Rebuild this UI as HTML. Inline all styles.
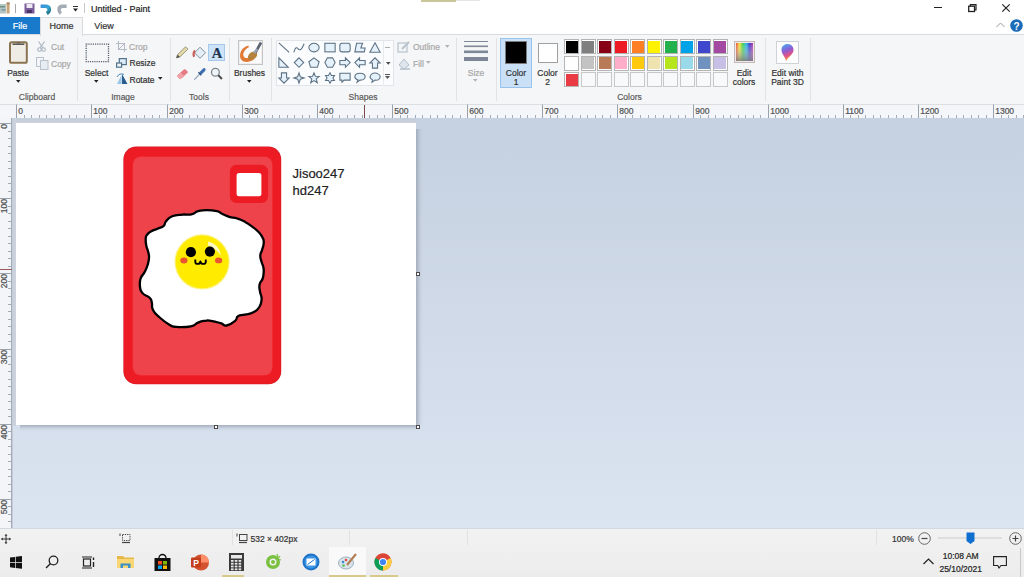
<!DOCTYPE html><html><head><meta charset="utf-8"><style>
*{margin:0;padding:0;box-sizing:border-box}
html,body{width:1024px;height:577px;overflow:hidden;background:#fff;font-family:"Liberation Sans",sans-serif}
.a{position:absolute}
.t{position:absolute;line-height:12px;white-space:nowrap;-webkit-text-stroke:0.2px currentColor}
svg{overflow:visible}
</style></head><body>
<div class="a" style="left:0px;top:0px;width:1024px;height:34px;background:#fff"></div>
<div class="a" style="left:421px;top:0px;width:35px;height:1.5px;background:#c9c79a"></div>
<div class="a" style="left:456px;top:0px;width:24px;height:1px;background:#e6e6e6"></div>
<svg class="a" style="left:0px;top:2px;" width="12" height="12" viewBox="0 0 12 12"><rect x="0" y="2" width="6" height="9.5" fill="#b4c6c2"/><rect x="0" y="4" width="5" height="1.5" fill="#6f8f86"/><rect x="1.5" y="7" width="4" height="1.6" fill="#7d9aa8"/><rect x="6.6" y="0.5" width="3" height="11" fill="#c9a57a"/><rect x="6.6" y="0.5" width="3" height="2" fill="#a88a66"/></svg>
<div class="a" style="left:15px;top:3.5px;width:1px;height:9.5px;background:#a8a8a8"></div>
<svg class="a" style="left:24px;top:3px;" width="11" height="11" viewBox="0 0 11 11"><rect x="0.5" y="0.5" width="10" height="10" fill="#7a5c9a"/><rect x="2.5" y="1" width="6" height="4" fill="#efe9f4"/><rect x="3" y="7" width="5" height="3" fill="#4b3566"/></svg>
<svg class="a" style="left:40px;top:3px;" width="12" height="12" viewBox="0 0 12 12"><defs><linearGradient id="ug" x1="0" y1="0" x2="1" y2="1"><stop offset="0" stop-color="#3a8fd8"/><stop offset=".5" stop-color="#35a6d6"/><stop offset="1" stop-color="#1f6f80"/></linearGradient></defs><path d="M0.6 3.3 H5.2 Q9.3 3.3 9.3 6.6 Q9.3 9 6.8 10.6" stroke="url(#ug)" stroke-width="3.6" fill="none"/></svg>
<svg class="a" style="left:56px;top:3px;" width="12" height="12" viewBox="0 0 12 12"><path d="M10.6 3.3 H6.8 Q3 3.3 3 6.6 Q3 9 4.8 10.6" stroke="#a3abb5" stroke-width="3.4" fill="none"/></svg>
<svg class="a" style="left:73px;top:6px;" width="6" height="6" viewBox="0 0 6 6"><rect x="0" y="0" width="5" height="1" fill="#333"/><path d="M0 2.5 H5 L2.5 5.5 Z" fill="#222"/></svg>
<div class="a" style="left:84px;top:3px;width:1px;height:10px;background:#c8c8c8"></div>
<div class="t" style="left:91px;top:2.5px;font-size:9px;color:#222;">Untitled - Paint</div>
<div class="a" style="left:933.7px;top:7px;width:8px;height:1.4px;background:#222"></div>
<svg class="a" style="left:967.5px;top:4px;" width="9" height="8" viewBox="0 0 9 8"><rect x="0.7" y="2.2" width="5.8" height="5.3" fill="none" stroke="#222" stroke-width="1.3"/><path d="M2.4 2.2 V0.7 H8 V5.8 H6.5" fill="none" stroke="#222" stroke-width="1.2"/></svg>
<svg class="a" style="left:1002px;top:3.5px;" width="8" height="8" viewBox="0 0 8 8"><path d="M0.3 0.3 L7.7 7.7 M7.7 0.3 L0.3 7.7" stroke="#222" stroke-width="1.2"/></svg>
<div class="a" style="left:0px;top:17px;width:40px;height:17px;background:#1979ca"></div>
<div class="t" style="left:0.0px;top:19.5px;width:40px;text-align:center;font-size:9px;color:#fff;">File</div>
<div class="t" style="left:84.0px;top:20.0px;width:40px;text-align:center;font-size:9px;color:#333;">View</div>
<svg class="a" style="left:996px;top:22px;" width="9" height="6" viewBox="0 0 9 6"><path d="M0.5 5 L4.5 1 L8.5 5" stroke="#9a9a9a" stroke-width="1" fill="none"/></svg>
<svg class="a" style="left:1010px;top:19px;" width="13" height="13" viewBox="0 0 13 13"><circle cx="6.5" cy="6.5" r="6.3" fill="#1b6bb8"/><text x="6.5" y="10.5" font-size="10" font-weight="bold" text-anchor="middle" fill="#fff" font-family="Liberation Sans">?</text></svg>
<div class="a" style="left:0px;top:34px;width:1024px;height:71px;background:#f5f6f7;border-top:1px solid #dadbdc;border-bottom:1px solid #dcdee2"></div>
<div class="a" style="left:40px;top:17px;width:43px;height:19px;background:#f5f6f7;border:1px solid #dadbdc;border-bottom:none"></div>
<div class="t" style="left:40.0px;top:20.0px;width:43px;text-align:center;font-size:9px;color:#333;">Home</div>
<div class="a" style="left:77px;top:38px;width:1px;height:63px;background:#e2e3e4"></div>
<div class="a" style="left:170px;top:38px;width:1px;height:63px;background:#e2e3e4"></div>
<div class="a" style="left:229px;top:38px;width:1px;height:63px;background:#e2e3e4"></div>
<div class="a" style="left:271px;top:38px;width:1px;height:63px;background:#e2e3e4"></div>
<div class="a" style="left:456px;top:38px;width:1px;height:63px;background:#e2e3e4"></div>
<div class="a" style="left:496px;top:38px;width:1px;height:63px;background:#e2e3e4"></div>
<div class="a" style="left:765px;top:38px;width:1px;height:63px;background:#e2e3e4"></div>
<div class="a" style="left:810px;top:38px;width:1px;height:63px;background:#e2e3e4"></div>
<div class="t" style="left:-3.0px;top:91.0px;width:80px;text-align:center;font-size:8.5px;color:#5c5c5c;">Clipboard</div>
<div class="t" style="left:83.0px;top:91.0px;width:80px;text-align:center;font-size:8.5px;color:#5c5c5c;">Image</div>
<div class="t" style="left:159.0px;top:91.0px;width:80px;text-align:center;font-size:8.5px;color:#5c5c5c;">Tools</div>
<div class="t" style="left:323.0px;top:91.0px;width:80px;text-align:center;font-size:8.5px;color:#5c5c5c;">Shapes</div>
<div class="t" style="left:589.5px;top:91.0px;width:80px;text-align:center;font-size:8.5px;color:#5c5c5c;">Colors</div>
<svg class="a" style="left:9px;top:40px;" width="19" height="24" viewBox="0 0 19 24"><rect x="1" y="2.2" width="16.8" height="20.6" rx="1.6" fill="#efece6" stroke="#8b7352" stroke-width="2"/><path d="M3.5 4.2 H15.3" stroke="#5d5a55" stroke-width="1.6"/><path d="M7.5 3.4 Q9.4 0.3 11.3 3.4 Z" fill="#6a6660"/></svg>
<div class="t" style="left:-2.0px;top:66.5px;width:40px;text-align:center;font-size:8.5px;color:#333;">Paste</div>
<svg class="a" style="left:15.75px;top:80.0px" width="4.5" height="2.8" viewBox="0 0 4.5 2.8"><path d="M0 0 H4.5 L2.25 2.8 Z" fill="#222"/></svg>
<svg class="a" style="left:37px;top:41px;" width="9" height="11" viewBox="0 0 9 11"><path d="M1.5 0.5 L6 7 M7.5 0.5 L3 7" stroke="#a9b4c0" stroke-width="1.1" fill="none"/><circle cx="2.5" cy="8.5" r="1.8" fill="none" stroke="#a9b4c0" stroke-width="1.1"/><circle cx="6.5" cy="8.5" r="1.8" fill="none" stroke="#a9b4c0" stroke-width="1.1"/></svg>
<div class="t" style="left:51px;top:40.5px;font-size:8.5px;color:#a8a8a8;">Cut</div>
<svg class="a" style="left:36px;top:57px;" width="13" height="13" viewBox="0 0 13 13"><rect x="0.5" y="0.5" width="7" height="9" fill="#f3f5f8" stroke="#b8c2cd"/><rect x="4.5" y="3.5" width="7.5" height="9" fill="#e7ecf2" stroke="#b8c2cd"/></svg>
<div class="t" style="left:51px;top:57.5px;font-size:8.5px;color:#a8a8a8;">Copy</div>
<svg class="a" style="left:85px;top:43px;" width="25" height="20" viewBox="0 0 25 20"><rect x="1.2" y="1.2" width="22.3" height="17.5" fill="none" stroke="#56606c" stroke-width="1.3" stroke-dasharray="1.2 1"/></svg>
<div class="t" style="left:76.5px;top:66.5px;width:40px;text-align:center;font-size:8.5px;color:#333;">Select</div>
<svg class="a" style="left:94.45px;top:79.89999999999999px" width="4.5" height="2.8" viewBox="0 0 4.5 2.8"><path d="M0 0 H4.5 L2.25 2.8 Z" fill="#222"/></svg>
<svg class="a" style="left:116px;top:41px;" width="11" height="11" viewBox="0 0 11 11"><path d="M2.5 0 V8.5 H11 M0 2.5 H8.5 V11" stroke="#b3bcc7" stroke-width="1.1" fill="none"/><path d="M3 8 L9 2" stroke="#b3bcc7" stroke-width="1"/></svg>
<div class="t" style="left:129px;top:40.5px;font-size:8.5px;color:#a8a8a8;">Crop</div>
<svg class="a" style="left:116px;top:58px;" width="11" height="10" viewBox="0 0 11 10"><rect x="3.3" y="0.6" width="7" height="6" fill="#dcedf8" stroke="#52728a" stroke-width="1.2"/><rect x="0.6" y="5" width="5" height="4.2" fill="#eef6fb" stroke="#52728a" stroke-width="1.2"/></svg>
<div class="t" style="left:129.5px;top:57.0px;font-size:8.5px;color:#333;">Resize</div>
<svg class="a" style="left:116px;top:73px;" width="12" height="12" viewBox="0 0 12 12"><path d="M6 1 L11.5 11 H6 Z" fill="#2a5d8f"/><path d="M5.5 2 L1 11 H5.5 Z" fill="#9cc6e6"/><path d="M1 4 A5 5 0 0 1 8 1.5" stroke="#4b8cc4" fill="none" stroke-width="1"/></svg>
<div class="t" style="left:129.5px;top:73.5px;font-size:8.5px;color:#333;">Rotate</div>
<svg class="a" style="left:157.75px;top:77.39999999999999px" width="4.5" height="2.8" viewBox="0 0 4.5 2.8"><path d="M0 0 H4.5 L2.25 2.8 Z" fill="#222"/></svg>
<div class="a" style="left:208.2px;top:44px;width:16.8px;height:16.7px;background:#cde3f7;border:1px solid #a6c8ea"></div>
<svg class="a" style="left:170px;top:40px;" width="60" height="46" viewBox="0 0 60 46"><path d="M176.4 57.9 L177.6 54.6 L185.6 46.8 L187.9 49.1 L179.9 56.9 Z" transform="translate(-170 -40)" fill="#e6dca6" stroke="#8d8a78" stroke-width=".9"/><path d="M176.4 57.9 L177.6 54.6 L179.9 56.9 Z" transform="translate(-170 -40)" fill="#555"/></svg>
<svg class="a" style="left:170px;top:40px;" width="60" height="46" viewBox="0 0 60 46"><g transform="translate(-170 -40)"><path d="M200 47.2 L205.5 52.8 L200 58.3 L194.5 52.8 Z" fill="#e4eef6" stroke="#7f919e" stroke-width="1"/><path d="M195 50.5 Q192.6 53.5 194.2 56.8" stroke="#c9605a" stroke-width="2.2" fill="none"/></g></svg>
<div class="t" style="left:208.5px;top:46.8px;width:17px;text-align:center;font-size:14.5px;color:#1e3550;font-family:'Liberation Serif',serif;"><b>A</b></div>
<svg class="a" style="left:170px;top:40px;" width="60" height="46" viewBox="0 0 60 46"><g transform="translate(-170 -40)"><path d="M177.5 75.2 L183.8 69.6 Q184.8 68.9 185.6 69.6 L187.6 71.5 Q188.2 72.3 187.4 73.1 L181.2 78.6 Q180.3 79.2 179.4 78.5 L177.4 76.6 Q176.8 75.9 177.5 75.2 Z" fill="#e57c83"/><path d="M177.5 75.2 L180.5 72.5 L184.5 76.2 L181.2 78.6 Q180.3 79.2 179.4 78.5 L177.4 76.6 Z" fill="#f0a2a6"/></g></svg>
<svg class="a" style="left:170px;top:40px;" width="60" height="46" viewBox="0 0 60 46"><g transform="translate(-170 -40)"><path d="M194.3 79.6 L200.3 73.4" stroke="#8ea2b8" stroke-width="1.3"/><path d="M199 72.5 L203.2 68.4 Q204.5 67.7 205.4 68.7 Q206 69.7 205.1 70.9 L201 75 Z" fill="#3d6fae"/><path d="M198.3 72.3 L201.3 75.3" stroke="#2a4f80" stroke-width="1.2"/></g></svg>
<svg class="a" style="left:170px;top:40px;" width="60" height="46" viewBox="0 0 60 46"><g transform="translate(-170 -40)"><circle cx="215.4" cy="72.3" r="3.9" fill="#f2f5f8" stroke="#7d8790" stroke-width="1.3"/><path d="M218.4 75.3 L221.9 79" stroke="#4a4a4a" stroke-width="2"/></g></svg>
<svg class="a" style="left:237.5px;top:40px;" width="25" height="25" viewBox="0 0 25 25"><rect x="0.6" y="0.6" width="23.8" height="23.8" fill="#fbfbfb" stroke="#c4c4c4" stroke-width="1.2"/><path d="M10.5 5.5 C4 7 0.8 13 2.5 18.5 C4.5 23 11 23 16 19.5 L14 16 C10 19 6.5 18.5 5.5 16 C4.5 13 7 9 10.8 7.2 Z" fill="#e07a36"/><ellipse cx="14.5" cy="15.8" rx="5.2" ry="3.6" transform="rotate(-40 14.5 15.8)" fill="#b5823e"/><path d="M17.5 12.5 L23 2.5" stroke="#5a6170" stroke-width="2.6"/><path d="M16 13 L19.5 9" stroke="#9aa4b4" stroke-width="2.5"/></svg>
<div class="t" style="left:227.5px;top:66.5px;width:44px;text-align:center;font-size:8.5px;color:#333;">Brushes</div>
<svg class="a" style="left:247.25px;top:80.3px" width="4.5" height="2.8" viewBox="0 0 4.5 2.8"><path d="M0 0 H4.5 L2.25 2.8 Z" fill="#222"/></svg>
<div class="a" style="left:276px;top:40px;width:118px;height:46px;background:#fbfcfd;border:1px solid #e1e4e8"></div>
<div class="a" style="left:383px;top:40px;width:1px;height:46px;background:#e8eaed"></div>
<svg class="a" style="left:278.3px;top:42.3px" width="12" height="12" viewBox="0 0 14 14"><path d="M1 1 L13 12" stroke="#5c7184" stroke-width="1.25"/></svg>
<svg class="a" style="left:293.37px;top:42.3px" width="12" height="12" viewBox="0 0 14 14"><path d="M1 12 Q3 4 6 8 Q9 12 13 2" stroke="#5c7184" stroke-width="1.25" fill="none"/></svg>
<svg class="a" style="left:308.44px;top:42.3px" width="12" height="12" viewBox="0 0 14 14"><ellipse cx="7" cy="6.5" rx="6" ry="5" fill="#e6f2fb" stroke="#5c7184" stroke-width="1.25"/></svg>
<svg class="a" style="left:323.51px;top:42.3px" width="12" height="12" viewBox="0 0 14 14"><rect x="1" y="1.5" width="12" height="10" fill="#e6f2fb" stroke="#5c7184" stroke-width="1.25"/></svg>
<svg class="a" style="left:338.58000000000004px;top:42.3px" width="12" height="12" viewBox="0 0 14 14"><rect x="1" y="1.5" width="12" height="10" rx="2.5" fill="#e6f2fb" stroke="#5c7184" stroke-width="1.25"/></svg>
<svg class="a" style="left:353.65px;top:42.3px" width="12" height="12" viewBox="0 0 14 14"><path d="M3 1.5 H10 L8 7 H13 L12 11.5 H1 Z" fill="#e6f2fb" stroke="#5c7184" stroke-width="1.25"/></svg>
<svg class="a" style="left:368.72px;top:42.3px" width="12" height="12" viewBox="0 0 14 14"><path d="M7 1 L13 12 H1 Z" fill="#e6f2fb" stroke="#5c7184" stroke-width="1.25"/></svg>
<svg class="a" style="left:278.3px;top:56.949999999999996px" width="12" height="12" viewBox="0 0 14 14"><path d="M1 1 V12 H12 Z" fill="#e6f2fb" stroke="#5c7184" stroke-width="1.25"/></svg>
<svg class="a" style="left:293.37px;top:56.949999999999996px" width="12" height="12" viewBox="0 0 14 14"><path d="M7 1 L12.5 6.5 L7 12 L1.5 6.5 Z" fill="#e6f2fb" stroke="#5c7184" stroke-width="1.25"/></svg>
<svg class="a" style="left:308.44px;top:56.949999999999996px" width="12" height="12" viewBox="0 0 14 14"><path d="M7 1 L13 5.5 L11 12 H3 L1 5.5 Z" fill="#e6f2fb" stroke="#5c7184" stroke-width="1.25"/></svg>
<svg class="a" style="left:323.51px;top:56.949999999999996px" width="12" height="12" viewBox="0 0 14 14"><path d="M4 1 H10 L13 6.5 L10 12 H4 L1 6.5 Z" fill="#e6f2fb" stroke="#5c7184" stroke-width="1.25"/></svg>
<svg class="a" style="left:338.58000000000004px;top:56.949999999999996px" width="12" height="12" viewBox="0 0 14 14"><path d="M1 4 H7.5 V1 L13 6.5 L7.5 12 V9 H1 Z" fill="#e6f2fb" stroke="#5c7184" stroke-width="1.25"/></svg>
<svg class="a" style="left:353.65px;top:56.949999999999996px" width="12" height="12" viewBox="0 0 14 14"><path d="M13 4 H6.5 V1 L1 6.5 L6.5 12 V9 H13 Z" fill="#e6f2fb" stroke="#5c7184" stroke-width="1.25"/></svg>
<svg class="a" style="left:368.72px;top:56.949999999999996px" width="12" height="12" viewBox="0 0 14 14"><path d="M4 13 V7 H1 L7 1 L13 7 H10 V13 Z" fill="#e6f2fb" stroke="#5c7184" stroke-width="1.25"/></svg>
<svg class="a" style="left:278.3px;top:71.6px" width="12" height="12" viewBox="0 0 14 14"><path d="M4 1 V7 H1 L7 13 L13 7 H10 V1 Z" fill="#e6f2fb" stroke="#5c7184" stroke-width="1.25"/></svg>
<svg class="a" style="left:293.37px;top:71.6px" width="12" height="12" viewBox="0 0 14 14"><path d="M7 1 L8.5 5.5 L13 7 L8.5 8.5 L7 13 L5.5 8.5 L1 7 L5.5 5.5 Z" fill="#e6f2fb" stroke="#5c7184" stroke-width="1.25"/></svg>
<svg class="a" style="left:308.44px;top:71.6px" width="12" height="12" viewBox="0 0 14 14"><path d="M7 1 L8.6 5 L13 5.2 L9.6 8 L10.8 12.5 L7 10 L3.2 12.5 L4.4 8 L1 5.2 L5.4 5 Z" fill="#e6f2fb" stroke="#5c7184" stroke-width="1.25"/></svg>
<svg class="a" style="left:323.51px;top:71.6px" width="12" height="12" viewBox="0 0 14 14"><path d="M7 1 L8.7 4 L12.2 4 L10.4 7 L12.2 10 L8.7 10 L7 13 L5.3 10 L1.8 10 L3.6 7 L1.8 4 L5.3 4 Z" fill="#e6f2fb" stroke="#5c7184" stroke-width="1.25"/></svg>
<svg class="a" style="left:338.58000000000004px;top:71.6px" width="12" height="12" viewBox="0 0 14 14"><path d="M1 1.5 H13 V9.5 H6 L3.5 12 V9.5 H1 Z" fill="#e6f2fb" stroke="#5c7184" stroke-width="1.25"/></svg>
<svg class="a" style="left:353.65px;top:71.6px" width="12" height="12" viewBox="0 0 14 14"><path d="M7 1.5 C11 1.5 13 3.5 13 5.5 C13 8 10 9.5 7 9.5 L3.5 12 L4.5 9 C2 8.5 1 7 1 5.5 C1 3.5 3 1.5 7 1.5 Z" fill="#e6f2fb" stroke="#5c7184" stroke-width="1.25"/></svg>
<svg class="a" style="left:368.72px;top:71.6px" width="12" height="12" viewBox="0 0 14 14"><path d="M3 2.5 Q7 0 11 2.5 Q14 4 12.5 7.5 Q11 10 7 9.5 L3.5 12 L4 9 Q0.5 7.5 1.5 5 Q1.8 3 3 2.5 Z" fill="#e6f2fb" stroke="#5c7184" stroke-width="1.25"/></svg>
<svg class="a" style="left:385px;top:47px;" width="6" height="2" viewBox="0 0 6 2"><rect x="0" y="0" width="5" height="1" fill="#b0b0b0"/></svg>
<svg class="a" style="left:386.15px;top:62.1px" width="4.5" height="2.8" viewBox="0 0 4.5 2.8"><path d="M0 0 H4.5 L2.25 2.8 Z" fill="#444"/></svg>
<svg class="a" style="left:385px;top:74px;" width="6" height="6" viewBox="0 0 6 6"><rect x="0" y="0" width="5" height="1" fill="#555"/><path d="M0 2 H5 L2.5 5 Z" fill="#555"/></svg>
<svg class="a" style="left:397px;top:40px;" width="14" height="13" viewBox="0 0 14 13"><rect x="1" y="3" width="9" height="9" fill="none" stroke="#b8c2cc" stroke-width="1.2"/><path d="M5 9 L12 2" stroke="#b8c2cc" stroke-width="2"/></svg>
<div class="t" style="left:413px;top:40.5px;font-size:8.5px;color:#a8a8a8;">Outline</div>
<svg class="a" style="left:444.75px;top:45.1px" width="4.5" height="2.8" viewBox="0 0 4.5 2.8"><path d="M0 0 H4.5 L2.25 2.8 Z" fill="#b0b0b0"/></svg>
<svg class="a" style="left:398px;top:57px;" width="14" height="13" viewBox="0 0 14 13"><path d="M1 8 L6 2 L11 8 L6 12 Z" fill="#dfe6ee" stroke="#b3bfcb"/><path d="M2 12 H12" stroke="#b3bfcb" stroke-width="1.5"/></svg>
<div class="t" style="left:413px;top:57.5px;font-size:8.5px;color:#a8a8a8;">Fill</div>
<svg class="a" style="left:426.45px;top:60.9px" width="4.5" height="2.8" viewBox="0 0 4.5 2.8"><path d="M0 0 H4.5 L2.25 2.8 Z" fill="#b0b0b0"/></svg>
<svg class="a" style="left:463px;top:40px;" width="26" height="22" viewBox="0 0 26 22"><rect x="1" y="1" width="24" height="1" fill="#7d8797"/><rect x="1" y="5.5" width="24" height="1.6" fill="#7d8797"/><rect x="1" y="10.5" width="24" height="2.6" fill="#7d8797"/><rect x="1" y="17" width="24" height="4" fill="#7d8797"/></svg>
<div class="t" style="left:461.0px;top:66.5px;width:30px;text-align:center;font-size:8.5px;color:#a8a8a8;">Size</div>
<svg class="a" style="left:473.45px;top:79.39999999999999px" width="4.5" height="2.8" viewBox="0 0 4.5 2.8"><path d="M0 0 H4.5 L2.25 2.8 Z" fill="#b0b0b0"/></svg>
<div class="a" style="left:500px;top:38px;width:32px;height:50px;background:#c9e0f7;border:1px solid #98c4ec"></div>
<div class="a" style="left:505px;top:41px;width:22px;height:23px;background:#000;border:1px solid #7c7c7c"></div>
<div class="t" style="left:500.0px;top:66.5px;width:32px;text-align:center;font-size:8.5px;color:#333;">Color</div>
<div class="t" style="left:500.0px;top:76.0px;width:32px;text-align:center;font-size:8.5px;color:#333;">1</div>
<div class="a" style="left:538px;top:43px;width:19.5px;height:19.5px;background:#fff;border:1px solid #a0a0a0"></div>
<div class="t" style="left:531.5px;top:66.5px;width:32px;text-align:center;font-size:8.5px;color:#333;">Color</div>
<div class="t" style="left:531.5px;top:76.0px;width:32px;text-align:center;font-size:8.5px;color:#333;">2</div>
<div class="a" style="left:564.0px;top:39.3px;width:15px;height:15px;background:#fff;border:1px solid #b4b4b4;box-shadow:inset 0 0 0 1px #fff"></div>
<div class="a" style="left:565.5px;top:40.8px;width:12px;height:12px;background:#000000"></div>
<div class="a" style="left:580.5px;top:39.3px;width:15px;height:15px;background:#fff;border:1px solid #b4b4b4;box-shadow:inset 0 0 0 1px #fff"></div>
<div class="a" style="left:582.0px;top:40.8px;width:12px;height:12px;background:#7f7f7f"></div>
<div class="a" style="left:597.0px;top:39.3px;width:15px;height:15px;background:#fff;border:1px solid #b4b4b4;box-shadow:inset 0 0 0 1px #fff"></div>
<div class="a" style="left:598.5px;top:40.8px;width:12px;height:12px;background:#880015"></div>
<div class="a" style="left:613.5px;top:39.3px;width:15px;height:15px;background:#fff;border:1px solid #b4b4b4;box-shadow:inset 0 0 0 1px #fff"></div>
<div class="a" style="left:615.0px;top:40.8px;width:12px;height:12px;background:#ed1c24"></div>
<div class="a" style="left:630.0px;top:39.3px;width:15px;height:15px;background:#fff;border:1px solid #b4b4b4;box-shadow:inset 0 0 0 1px #fff"></div>
<div class="a" style="left:631.5px;top:40.8px;width:12px;height:12px;background:#ff7f27"></div>
<div class="a" style="left:646.5px;top:39.3px;width:15px;height:15px;background:#fff;border:1px solid #b4b4b4;box-shadow:inset 0 0 0 1px #fff"></div>
<div class="a" style="left:648.0px;top:40.8px;width:12px;height:12px;background:#fff200"></div>
<div class="a" style="left:663.0px;top:39.3px;width:15px;height:15px;background:#fff;border:1px solid #b4b4b4;box-shadow:inset 0 0 0 1px #fff"></div>
<div class="a" style="left:664.5px;top:40.8px;width:12px;height:12px;background:#22b14c"></div>
<div class="a" style="left:679.5px;top:39.3px;width:15px;height:15px;background:#fff;border:1px solid #b4b4b4;box-shadow:inset 0 0 0 1px #fff"></div>
<div class="a" style="left:681.0px;top:40.8px;width:12px;height:12px;background:#00a2e8"></div>
<div class="a" style="left:696.0px;top:39.3px;width:15px;height:15px;background:#fff;border:1px solid #b4b4b4;box-shadow:inset 0 0 0 1px #fff"></div>
<div class="a" style="left:697.5px;top:40.8px;width:12px;height:12px;background:#3f48cc"></div>
<div class="a" style="left:712.5px;top:39.3px;width:15px;height:15px;background:#fff;border:1px solid #b4b4b4;box-shadow:inset 0 0 0 1px #fff"></div>
<div class="a" style="left:714.0px;top:40.8px;width:12px;height:12px;background:#a349a4"></div>
<div class="a" style="left:564.0px;top:55.8px;width:15px;height:15px;background:#fff;border:1px solid #b4b4b4;box-shadow:inset 0 0 0 1px #fff"></div>
<div class="a" style="left:565.5px;top:57.3px;width:12px;height:12px;background:#ffffff"></div>
<div class="a" style="left:580.5px;top:55.8px;width:15px;height:15px;background:#fff;border:1px solid #b4b4b4;box-shadow:inset 0 0 0 1px #fff"></div>
<div class="a" style="left:582.0px;top:57.3px;width:12px;height:12px;background:#c3c3c3"></div>
<div class="a" style="left:597.0px;top:55.8px;width:15px;height:15px;background:#fff;border:1px solid #b4b4b4;box-shadow:inset 0 0 0 1px #fff"></div>
<div class="a" style="left:598.5px;top:57.3px;width:12px;height:12px;background:#b97a57"></div>
<div class="a" style="left:613.5px;top:55.8px;width:15px;height:15px;background:#fff;border:1px solid #b4b4b4;box-shadow:inset 0 0 0 1px #fff"></div>
<div class="a" style="left:615.0px;top:57.3px;width:12px;height:12px;background:#ffaec9"></div>
<div class="a" style="left:630.0px;top:55.8px;width:15px;height:15px;background:#fff;border:1px solid #b4b4b4;box-shadow:inset 0 0 0 1px #fff"></div>
<div class="a" style="left:631.5px;top:57.3px;width:12px;height:12px;background:#ffc90e"></div>
<div class="a" style="left:646.5px;top:55.8px;width:15px;height:15px;background:#fff;border:1px solid #b4b4b4;box-shadow:inset 0 0 0 1px #fff"></div>
<div class="a" style="left:648.0px;top:57.3px;width:12px;height:12px;background:#efe4b0"></div>
<div class="a" style="left:663.0px;top:55.8px;width:15px;height:15px;background:#fff;border:1px solid #b4b4b4;box-shadow:inset 0 0 0 1px #fff"></div>
<div class="a" style="left:664.5px;top:57.3px;width:12px;height:12px;background:#b5e61d"></div>
<div class="a" style="left:679.5px;top:55.8px;width:15px;height:15px;background:#fff;border:1px solid #b4b4b4;box-shadow:inset 0 0 0 1px #fff"></div>
<div class="a" style="left:681.0px;top:57.3px;width:12px;height:12px;background:#99d9ea"></div>
<div class="a" style="left:696.0px;top:55.8px;width:15px;height:15px;background:#fff;border:1px solid #b4b4b4;box-shadow:inset 0 0 0 1px #fff"></div>
<div class="a" style="left:697.5px;top:57.3px;width:12px;height:12px;background:#7092be"></div>
<div class="a" style="left:712.5px;top:55.8px;width:15px;height:15px;background:#fff;border:1px solid #b4b4b4;box-shadow:inset 0 0 0 1px #fff"></div>
<div class="a" style="left:714.0px;top:57.3px;width:12px;height:12px;background:#c8bfe7"></div>
<div class="a" style="left:564.0px;top:72.3px;width:15px;height:15px;background:#fff;border:1px solid #b4b4b4;box-shadow:inset 0 0 0 1px #fff"></div>
<div class="a" style="left:565.5px;top:73.8px;width:12px;height:12px;background:#ea3a44"></div>
<div class="a" style="left:580.5px;top:72.3px;width:15px;height:15px;background:#f8f9fa;border:1px solid #c8c8c8"></div>
<div class="a" style="left:597.0px;top:72.3px;width:15px;height:15px;background:#f8f9fa;border:1px solid #c8c8c8"></div>
<div class="a" style="left:613.5px;top:72.3px;width:15px;height:15px;background:#f8f9fa;border:1px solid #c8c8c8"></div>
<div class="a" style="left:630.0px;top:72.3px;width:15px;height:15px;background:#f8f9fa;border:1px solid #c8c8c8"></div>
<div class="a" style="left:646.5px;top:72.3px;width:15px;height:15px;background:#f8f9fa;border:1px solid #c8c8c8"></div>
<div class="a" style="left:663.0px;top:72.3px;width:15px;height:15px;background:#f8f9fa;border:1px solid #c8c8c8"></div>
<div class="a" style="left:679.5px;top:72.3px;width:15px;height:15px;background:#f8f9fa;border:1px solid #c8c8c8"></div>
<div class="a" style="left:696.0px;top:72.3px;width:15px;height:15px;background:#f8f9fa;border:1px solid #c8c8c8"></div>
<div class="a" style="left:712.5px;top:72.3px;width:15px;height:15px;background:#f8f9fa;border:1px solid #c8c8c8"></div>
<svg class="a" style="left:734px;top:41px;" width="21" height="22" viewBox="0 0 21 22"><defs><linearGradient id="rb" x1="0" x2="1"><stop offset="0" stop-color="#e84a3a"/><stop offset=".2" stop-color="#f2e23a"/><stop offset=".4" stop-color="#3fcf4a"/><stop offset=".6" stop-color="#2fb8e8"/><stop offset=".8" stop-color="#3a3acb"/><stop offset="1" stop-color="#c03aa8"/></linearGradient><linearGradient id="gv" x1="0" y1="0" x2="0" y2="1"><stop offset="0" stop-color="#fff" stop-opacity="0"/><stop offset="1" stop-color="#808080" stop-opacity=".9"/></linearGradient></defs><rect x="0.5" y="0.5" width="20" height="21" fill="#f0e8e8" stroke="#c4b8b8"/><rect x="2" y="2" width="17" height="18" fill="url(#rb)"/><rect x="2" y="2" width="17" height="18" fill="url(#gv)"/></svg>
<div class="t" style="left:724.0px;top:66.5px;width:40px;text-align:center;font-size:8.5px;color:#333;">Edit</div>
<div class="t" style="left:724.0px;top:76.0px;width:40px;text-align:center;font-size:8.5px;color:#333;">colors</div>
<svg class="a" style="left:776px;top:41px;" width="23" height="23" viewBox="0 0 23 23"><defs><linearGradient id="p3" x1="0" y1="0" x2="0.3" y2="1"><stop offset="0" stop-color="#3fb6f0"/><stop offset=".45" stop-color="#8a5fd6"/><stop offset=".75" stop-color="#e0508a"/><stop offset="1" stop-color="#f39a3a"/></linearGradient></defs><rect x="0.5" y="0.5" width="22" height="22" fill="#fdfdfd" stroke="#cfd3d8"/><path d="M11.5 3 C15.5 3 17.5 6 17.5 9 C17.5 13 13 15 10 20 C9.5 16 5.5 13 5.5 9 C5.5 5.5 8 3 11.5 3 Z" fill="url(#p3)"/></svg>
<div class="t" style="left:762.5px;top:66.5px;width:50px;text-align:center;font-size:8.5px;color:#333;">Edit with</div>
<div class="t" style="left:762.5px;top:76.0px;width:50px;text-align:center;font-size:8.5px;color:#333;">Paint 3D</div>
<div class="a" style="left:0px;top:105px;width:1024px;height:13px;background:#f4f6fa"></div>
<div class="a" style="left:11px;top:117.5px;width:1013px;height:1px;background:#a3abb7"></div>
<svg class="a" style="left:0px;top:104px;" width="1024" height="14" viewBox="0 0 1024 14"><rect x="16" y="0.5" width="1" height="13.5" fill="#9aa3ad"/><rect x="24" y="11" width="1" height="3" fill="#a4acb6"/><rect x="31" y="11" width="1" height="3" fill="#a4acb6"/><rect x="39" y="11" width="1" height="3" fill="#a4acb6"/><rect x="46" y="11" width="1" height="3" fill="#a4acb6"/><rect x="54" y="11" width="1" height="3" fill="#a4acb6"/><rect x="61" y="11" width="1" height="3" fill="#a4acb6"/><rect x="69" y="11" width="1" height="3" fill="#a4acb6"/><rect x="76" y="11" width="1" height="3" fill="#a4acb6"/><rect x="84" y="11" width="1" height="3" fill="#a4acb6"/><rect x="91" y="0.5" width="1" height="13.5" fill="#9aa3ad"/><rect x="99" y="11" width="1" height="3" fill="#a4acb6"/><rect x="106" y="11" width="1" height="3" fill="#a4acb6"/><rect x="114" y="11" width="1" height="3" fill="#a4acb6"/><rect x="121" y="11" width="1" height="3" fill="#a4acb6"/><rect x="129" y="11" width="1" height="3" fill="#a4acb6"/><rect x="136" y="11" width="1" height="3" fill="#a4acb6"/><rect x="144" y="11" width="1" height="3" fill="#a4acb6"/><rect x="152" y="11" width="1" height="3" fill="#a4acb6"/><rect x="159" y="11" width="1" height="3" fill="#a4acb6"/><rect x="167" y="0.5" width="1" height="13.5" fill="#9aa3ad"/><rect x="174" y="11" width="1" height="3" fill="#a4acb6"/><rect x="182" y="11" width="1" height="3" fill="#a4acb6"/><rect x="189" y="11" width="1" height="3" fill="#a4acb6"/><rect x="197" y="11" width="1" height="3" fill="#a4acb6"/><rect x="204" y="11" width="1" height="3" fill="#a4acb6"/><rect x="212" y="11" width="1" height="3" fill="#a4acb6"/><rect x="219" y="11" width="1" height="3" fill="#a4acb6"/><rect x="227" y="11" width="1" height="3" fill="#a4acb6"/><rect x="234" y="11" width="1" height="3" fill="#a4acb6"/><rect x="242" y="0.5" width="1" height="13.5" fill="#9aa3ad"/><rect x="249" y="11" width="1" height="3" fill="#a4acb6"/><rect x="257" y="11" width="1" height="3" fill="#a4acb6"/><rect x="264" y="11" width="1" height="3" fill="#a4acb6"/><rect x="272" y="11" width="1" height="3" fill="#a4acb6"/><rect x="279" y="11" width="1" height="3" fill="#a4acb6"/><rect x="287" y="11" width="1" height="3" fill="#a4acb6"/><rect x="294" y="11" width="1" height="3" fill="#a4acb6"/><rect x="302" y="11" width="1" height="3" fill="#a4acb6"/><rect x="309" y="11" width="1" height="3" fill="#a4acb6"/><rect x="317" y="0.5" width="1" height="13.5" fill="#9aa3ad"/><rect x="324" y="11" width="1" height="3" fill="#a4acb6"/><rect x="332" y="11" width="1" height="3" fill="#a4acb6"/><rect x="339" y="11" width="1" height="3" fill="#a4acb6"/><rect x="347" y="11" width="1" height="3" fill="#a4acb6"/><rect x="354" y="11" width="1" height="3" fill="#a4acb6"/><rect x="362" y="11" width="1" height="3" fill="#a4acb6"/><rect x="369" y="11" width="1" height="3" fill="#a4acb6"/><rect x="377" y="11" width="1" height="3" fill="#a4acb6"/><rect x="384" y="11" width="1" height="3" fill="#a4acb6"/><rect x="392" y="0.5" width="1" height="13.5" fill="#9aa3ad"/><rect x="400" y="11" width="1" height="3" fill="#a4acb6"/><rect x="407" y="11" width="1" height="3" fill="#a4acb6"/><rect x="415" y="11" width="1" height="3" fill="#a4acb6"/><rect x="422" y="11" width="1" height="3" fill="#a4acb6"/><rect x="430" y="11" width="1" height="3" fill="#a4acb6"/><rect x="437" y="11" width="1" height="3" fill="#a4acb6"/><rect x="445" y="11" width="1" height="3" fill="#a4acb6"/><rect x="452" y="11" width="1" height="3" fill="#a4acb6"/><rect x="460" y="11" width="1" height="3" fill="#a4acb6"/><rect x="467" y="0.5" width="1" height="13.5" fill="#9aa3ad"/><rect x="475" y="11" width="1" height="3" fill="#a4acb6"/><rect x="482" y="11" width="1" height="3" fill="#a4acb6"/><rect x="490" y="11" width="1" height="3" fill="#a4acb6"/><rect x="497" y="11" width="1" height="3" fill="#a4acb6"/><rect x="505" y="11" width="1" height="3" fill="#a4acb6"/><rect x="512" y="11" width="1" height="3" fill="#a4acb6"/><rect x="520" y="11" width="1" height="3" fill="#a4acb6"/><rect x="527" y="11" width="1" height="3" fill="#a4acb6"/><rect x="535" y="11" width="1" height="3" fill="#a4acb6"/><rect x="542" y="0.5" width="1" height="13.5" fill="#9aa3ad"/><rect x="550" y="11" width="1" height="3" fill="#a4acb6"/><rect x="557" y="11" width="1" height="3" fill="#a4acb6"/><rect x="565" y="11" width="1" height="3" fill="#a4acb6"/><rect x="572" y="11" width="1" height="3" fill="#a4acb6"/><rect x="580" y="11" width="1" height="3" fill="#a4acb6"/><rect x="587" y="11" width="1" height="3" fill="#a4acb6"/><rect x="595" y="11" width="1" height="3" fill="#a4acb6"/><rect x="602" y="11" width="1" height="3" fill="#a4acb6"/><rect x="610" y="11" width="1" height="3" fill="#a4acb6"/><rect x="617" y="0.5" width="1" height="13.5" fill="#9aa3ad"/><rect x="625" y="11" width="1" height="3" fill="#a4acb6"/><rect x="632" y="11" width="1" height="3" fill="#a4acb6"/><rect x="640" y="11" width="1" height="3" fill="#a4acb6"/><rect x="648" y="11" width="1" height="3" fill="#a4acb6"/><rect x="655" y="11" width="1" height="3" fill="#a4acb6"/><rect x="663" y="11" width="1" height="3" fill="#a4acb6"/><rect x="670" y="11" width="1" height="3" fill="#a4acb6"/><rect x="678" y="11" width="1" height="3" fill="#a4acb6"/><rect x="685" y="11" width="1" height="3" fill="#a4acb6"/><rect x="693" y="0.5" width="1" height="13.5" fill="#9aa3ad"/><rect x="700" y="11" width="1" height="3" fill="#a4acb6"/><rect x="708" y="11" width="1" height="3" fill="#a4acb6"/><rect x="715" y="11" width="1" height="3" fill="#a4acb6"/><rect x="723" y="11" width="1" height="3" fill="#a4acb6"/><rect x="730" y="11" width="1" height="3" fill="#a4acb6"/><rect x="738" y="11" width="1" height="3" fill="#a4acb6"/><rect x="745" y="11" width="1" height="3" fill="#a4acb6"/><rect x="753" y="11" width="1" height="3" fill="#a4acb6"/><rect x="760" y="11" width="1" height="3" fill="#a4acb6"/><rect x="768" y="0.5" width="1" height="13.5" fill="#9aa3ad"/><rect x="775" y="11" width="1" height="3" fill="#a4acb6"/><rect x="783" y="11" width="1" height="3" fill="#a4acb6"/><rect x="790" y="11" width="1" height="3" fill="#a4acb6"/><rect x="798" y="11" width="1" height="3" fill="#a4acb6"/><rect x="805" y="11" width="1" height="3" fill="#a4acb6"/><rect x="813" y="11" width="1" height="3" fill="#a4acb6"/><rect x="820" y="11" width="1" height="3" fill="#a4acb6"/><rect x="828" y="11" width="1" height="3" fill="#a4acb6"/><rect x="835" y="11" width="1" height="3" fill="#a4acb6"/><rect x="843" y="0.5" width="1" height="13.5" fill="#9aa3ad"/><rect x="850" y="11" width="1" height="3" fill="#a4acb6"/><rect x="858" y="11" width="1" height="3" fill="#a4acb6"/><rect x="865" y="11" width="1" height="3" fill="#a4acb6"/><rect x="873" y="11" width="1" height="3" fill="#a4acb6"/><rect x="880" y="11" width="1" height="3" fill="#a4acb6"/><rect x="888" y="11" width="1" height="3" fill="#a4acb6"/><rect x="896" y="11" width="1" height="3" fill="#a4acb6"/><rect x="903" y="11" width="1" height="3" fill="#a4acb6"/><rect x="911" y="11" width="1" height="3" fill="#a4acb6"/><rect x="918" y="0.5" width="1" height="13.5" fill="#9aa3ad"/><rect x="926" y="11" width="1" height="3" fill="#a4acb6"/><rect x="933" y="11" width="1" height="3" fill="#a4acb6"/><rect x="941" y="11" width="1" height="3" fill="#a4acb6"/><rect x="948" y="11" width="1" height="3" fill="#a4acb6"/><rect x="956" y="11" width="1" height="3" fill="#a4acb6"/><rect x="963" y="11" width="1" height="3" fill="#a4acb6"/><rect x="971" y="11" width="1" height="3" fill="#a4acb6"/><rect x="978" y="11" width="1" height="3" fill="#a4acb6"/><rect x="986" y="11" width="1" height="3" fill="#a4acb6"/><rect x="993" y="0.5" width="1" height="13.5" fill="#9aa3ad"/><rect x="1001" y="11" width="1" height="3" fill="#a4acb6"/><rect x="1008" y="11" width="1" height="3" fill="#a4acb6"/><rect x="1016" y="11" width="1" height="3" fill="#a4acb6"/><rect x="1023" y="11" width="1" height="3" fill="#a4acb6"/></svg>
<div class="t" style="left:18.2px;top:104.5px;font-size:8.5px;color:#505050;">0</div>
<div class="t" style="left:93.2px;top:104.5px;font-size:8.5px;color:#505050;">100</div>
<div class="t" style="left:169.2px;top:104.5px;font-size:8.5px;color:#505050;">200</div>
<div class="t" style="left:244.2px;top:104.5px;font-size:8.5px;color:#505050;">300</div>
<div class="t" style="left:319.2px;top:104.5px;font-size:8.5px;color:#505050;">400</div>
<div class="t" style="left:394.2px;top:104.5px;font-size:8.5px;color:#505050;">500</div>
<div class="t" style="left:469.2px;top:104.5px;font-size:8.5px;color:#505050;">600</div>
<div class="t" style="left:544.2px;top:104.5px;font-size:8.5px;color:#505050;">700</div>
<div class="t" style="left:619.2px;top:104.5px;font-size:8.5px;color:#505050;">800</div>
<div class="t" style="left:695.2px;top:104.5px;font-size:8.5px;color:#505050;">900</div>
<div class="t" style="left:770.2px;top:104.5px;font-size:8.5px;color:#505050;">1000</div>
<div class="t" style="left:845.2px;top:104.5px;font-size:8.5px;color:#505050;">1100</div>
<div class="t" style="left:920.2px;top:104.5px;font-size:8.5px;color:#505050;">1200</div>
<div class="t" style="left:995.2px;top:104.5px;font-size:8.5px;color:#505050;">1300</div>
<div class="a" style="left:363.5px;top:105px;width:1.6px;height:13px;background:linear-gradient(90deg,#e0b0b0,#7a4a4a,#e8c0c0)"></div>
<div class="a" style="left:11px;top:118px;width:1013px;height:410px;background:linear-gradient(#c5d0e0,#dbe4f1)"></div>
<div class="a" style="left:11px;top:118.5px;width:405px;height:4px;background:linear-gradient(#c4ccd8,#cdd4df)"></div>
<div class="a" style="left:11px;top:425px;width:2px;height:103px;background:#c3ccd8"></div>
<div class="a" style="left:11px;top:118.5px;width:5px;height:307px;background:linear-gradient(90deg,#c4ccd8,#cdd4df)"></div>
<div class="a" style="left:0px;top:118px;width:11.5px;height:410px;background:#f3f5f8;border-right:1px solid #a3abb7"></div>
<svg class="a" style="left:0px;top:118px;" width="11" height="411" viewBox="0 0 11 411"><rect x="0" y="5" width="11" height="1" fill="#9aa3ad"/><rect x="8" y="13" width="3" height="1" fill="#a4acb6"/><rect x="8" y="20" width="3" height="1" fill="#a4acb6"/><rect x="8" y="28" width="3" height="1" fill="#a4acb6"/><rect x="8" y="35" width="3" height="1" fill="#a4acb6"/><rect x="8" y="43" width="3" height="1" fill="#a4acb6"/><rect x="8" y="50" width="3" height="1" fill="#a4acb6"/><rect x="8" y="58" width="3" height="1" fill="#a4acb6"/><rect x="8" y="65" width="3" height="1" fill="#a4acb6"/><rect x="8" y="73" width="3" height="1" fill="#a4acb6"/><rect x="0" y="80" width="11" height="1" fill="#9aa3ad"/><rect x="8" y="88" width="3" height="1" fill="#a4acb6"/><rect x="8" y="95" width="3" height="1" fill="#a4acb6"/><rect x="8" y="103" width="3" height="1" fill="#a4acb6"/><rect x="8" y="110" width="3" height="1" fill="#a4acb6"/><rect x="8" y="118" width="3" height="1" fill="#a4acb6"/><rect x="8" y="125" width="3" height="1" fill="#a4acb6"/><rect x="8" y="133" width="3" height="1" fill="#a4acb6"/><rect x="8" y="140" width="3" height="1" fill="#a4acb6"/><rect x="8" y="148" width="3" height="1" fill="#a4acb6"/><rect x="0" y="155" width="11" height="1" fill="#9aa3ad"/><rect x="8" y="163" width="3" height="1" fill="#a4acb6"/><rect x="8" y="170" width="3" height="1" fill="#a4acb6"/><rect x="8" y="178" width="3" height="1" fill="#a4acb6"/><rect x="8" y="186" width="3" height="1" fill="#a4acb6"/><rect x="8" y="193" width="3" height="1" fill="#a4acb6"/><rect x="8" y="201" width="3" height="1" fill="#a4acb6"/><rect x="8" y="208" width="3" height="1" fill="#a4acb6"/><rect x="8" y="216" width="3" height="1" fill="#a4acb6"/><rect x="8" y="223" width="3" height="1" fill="#a4acb6"/><rect x="0" y="231" width="11" height="1" fill="#9aa3ad"/><rect x="8" y="238" width="3" height="1" fill="#a4acb6"/><rect x="8" y="246" width="3" height="1" fill="#a4acb6"/><rect x="8" y="253" width="3" height="1" fill="#a4acb6"/><rect x="8" y="261" width="3" height="1" fill="#a4acb6"/><rect x="8" y="268" width="3" height="1" fill="#a4acb6"/><rect x="8" y="276" width="3" height="1" fill="#a4acb6"/><rect x="8" y="283" width="3" height="1" fill="#a4acb6"/><rect x="8" y="291" width="3" height="1" fill="#a4acb6"/><rect x="8" y="298" width="3" height="1" fill="#a4acb6"/><rect x="0" y="306" width="11" height="1" fill="#9aa3ad"/><rect x="8" y="313" width="3" height="1" fill="#a4acb6"/><rect x="8" y="321" width="3" height="1" fill="#a4acb6"/><rect x="8" y="328" width="3" height="1" fill="#a4acb6"/><rect x="8" y="336" width="3" height="1" fill="#a4acb6"/><rect x="8" y="343" width="3" height="1" fill="#a4acb6"/><rect x="8" y="351" width="3" height="1" fill="#a4acb6"/><rect x="8" y="358" width="3" height="1" fill="#a4acb6"/><rect x="8" y="366" width="3" height="1" fill="#a4acb6"/><rect x="8" y="373" width="3" height="1" fill="#a4acb6"/><rect x="0" y="381" width="11" height="1" fill="#9aa3ad"/><rect x="8" y="388" width="3" height="1" fill="#a4acb6"/><rect x="8" y="396" width="3" height="1" fill="#a4acb6"/><rect x="8" y="403" width="3" height="1" fill="#a4acb6"/><rect x="8" y="411" width="3" height="1" fill="#a4acb6"/><rect x="8" y="418" width="3" height="1" fill="#a4acb6"/><rect x="8" y="426" width="3" height="1" fill="#a4acb6"/><rect x="8" y="434" width="3" height="1" fill="#a4acb6"/><rect x="8" y="441" width="3" height="1" fill="#a4acb6"/><rect x="8" y="449" width="3" height="1" fill="#a4acb6"/></svg>
<div class="t" style="left:-6px;top:128px;width:20px;text-align:right;font-size:8.5px;color:#505050;transform:rotate(-90deg)">0</div>
<div class="t" style="left:-6px;top:203px;width:20px;text-align:right;font-size:8.5px;color:#505050;transform:rotate(-90deg)">100</div>
<div class="t" style="left:-6px;top:278px;width:20px;text-align:right;font-size:8.5px;color:#505050;transform:rotate(-90deg)">200</div>
<div class="t" style="left:-6px;top:354px;width:20px;text-align:right;font-size:8.5px;color:#505050;transform:rotate(-90deg)">300</div>
<div class="t" style="left:-6px;top:429px;width:20px;text-align:right;font-size:8.5px;color:#505050;transform:rotate(-90deg)">400</div>
<div class="t" style="left:-6px;top:504px;width:20px;text-align:right;font-size:8.5px;color:#505050;transform:rotate(-90deg)">500</div>
<div class="a" style="left:0px;top:268.5px;width:12px;height:1.6px;background:linear-gradient(#e9b8b8,#9a5a5a,#e9c0c0)"></div>
<div class="a" style="left:416px;top:128.6px;width:7px;height:296.4px;background:linear-gradient(90deg,rgba(150,160,175,.75),rgba(180,190,205,.3) 60%,rgba(197,208,224,0))"></div>
<div class="a" style="left:20px;top:425px;width:396px;height:6px;background:linear-gradient(rgba(150,160,175,.75),rgba(180,190,205,.3) 60%,rgba(197,208,224,0))"></div>
<div class="a" style="left:15.5px;top:122.5px;width:400.5px;height:302.5px;background:#fff"></div>
<div class="a" style="left:416px;top:272px;width:3.8px;height:3.8px;background:#fff;border:0.9px solid #4a4a4a"></div>
<div class="a" style="left:214px;top:425px;width:3.8px;height:3.8px;background:#fff;border:0.9px solid #4a4a4a"></div>
<div class="a" style="left:416px;top:425px;width:3.8px;height:3.8px;background:#fff;border:0.9px solid #4a4a4a"></div>
<svg class="a" style="left:0;top:0" width="1024" height="577" viewBox="0 0 1024 577">
<rect x="123.4" y="146.6" width="157.8" height="237.7" rx="12.8" fill="#cf1a25"/>
<rect x="123.9" y="147.1" width="156.8" height="236.7" rx="12.4" fill="#ed1b24"/>
<rect x="132.6" y="156.4" width="140" height="219.2" rx="8.4" fill="#f2363f"/>
<rect x="133.2" y="157" width="138.8" height="218" rx="8" fill="#ee434b"/>
<rect x="229.9" y="164.8" width="38.2" height="38.2" rx="6.5" fill="#ed1c24"/>
<rect x="236.6" y="172.9" width="24.8" height="23.4" rx="2.5" fill="#fff"/>
<path d="M163.7 225.9 C166.0 223.9 163.7 223.9 166.0 221.3 C168.3 218.7 167.8 218.1 172.2 216.3 C176.6 214.5 177.3 215.1 182.4 214.6 C187.5 214.1 187.2 215.3 191.4 214.4 C195.6 213.5 194.0 212.3 198.1 211.2 C202.2 210.1 201.8 210.1 206.8 210.1 C211.8 210.1 212.7 210.2 216.9 211.2 C221.1 212.2 219.2 212.5 222.5 214.0 C225.8 215.5 225.4 215.6 229.3 216.8 C233.2 218.0 233.0 217.1 237.2 218.5 C241.4 219.9 241.2 219.8 245.1 221.9 C249.0 224.0 248.3 223.7 251.9 226.4 C255.5 229.1 255.7 229.0 258.6 232.0 C261.5 235.0 261.2 234.7 262.6 237.7 C264.0 240.7 263.9 240.0 263.7 243.3 C263.5 246.6 262.9 246.8 262.0 250.1 C261.1 253.4 260.4 252.5 260.3 255.7 C260.2 258.9 260.7 258.7 261.6 262.0 C262.5 265.3 263.0 264.8 263.5 268.0 C264.0 271.2 263.8 271.1 263.5 274.0 C263.2 276.9 263.5 276.2 262.5 279.0 C261.5 281.8 260.3 281.0 259.6 284.4 C258.9 287.8 259.5 287.8 260.0 291.7 C260.5 295.6 261.8 294.9 261.6 299.0 C261.4 303.1 261.6 303.5 259.4 307.0 C257.2 310.5 257.3 310.2 253.4 312.3 C249.5 314.4 249.0 313.7 244.9 314.7 C240.8 315.7 240.6 314.6 238.0 316.2 C235.4 317.8 238.2 318.3 235.2 320.8 C232.2 323.3 230.6 324.9 226.7 325.5 C222.8 326.1 224.8 324.5 220.6 323.2 C216.4 321.9 215.1 321.4 210.9 320.8 C206.7 320.2 208.4 320.3 205.0 320.8 C201.6 321.3 201.9 321.1 198.1 322.6 C194.3 324.1 196.6 325.2 190.8 326.3 C185.0 327.4 182.0 327.4 176.2 326.9 C170.4 326.4 173.5 327.0 169.0 324.4 C164.5 321.8 163.6 321.0 159.3 317.2 C155.0 313.4 155.0 313.9 153.0 310.0 C151.0 306.1 152.7 305.9 151.8 302.6 C150.9 299.3 152.1 300.4 149.6 297.8 C147.1 295.2 144.9 296.2 142.3 292.9 C139.7 289.6 140.3 289.5 139.9 285.6 C139.5 281.7 139.5 281.8 140.7 278.3 C141.9 274.8 142.7 275.8 144.5 272.3 C146.3 268.8 146.4 268.8 147.6 265.0 C148.8 261.2 148.8 261.4 149.0 258.0 C149.2 254.6 149.0 255.6 148.3 252.3 C147.6 249.0 147.0 249.2 146.3 245.6 C145.6 242.0 145.5 241.7 145.7 238.8 C145.9 235.9 145.6 236.8 147.0 234.9 C148.4 233.0 148.0 233.2 150.8 231.5 C153.6 229.8 154.1 230.2 157.5 228.7 C160.9 227.2 161.4 227.9 163.7 225.9 Z" fill="#fff" stroke="#000" stroke-width="2.3" stroke-linejoin="round"/>
<circle cx="202.1" cy="261.9" r="27.6" fill="#fdf27c"/>
<circle cx="202.1" cy="261.9" r="26.4" fill="#ffeb00"/>
<path d="M208 241.6 Q218.8 243.8 221.2 255.6 Q215.2 247.6 208 245.4 Z" fill="#fff9c4"/>
<circle cx="190.9" cy="252.2" r="5.1" fill="#000"/>
<circle cx="209.9" cy="251.6" r="5.1" fill="#000"/>
<ellipse cx="183.9" cy="260.5" rx="3.6" ry="2.9" fill="#ea5530"/>
<ellipse cx="218.6" cy="260.4" rx="3.6" ry="2.9" fill="#ea5530"/>
<path d="M195.3 259.6 V262.2 Q195.5 264 197.8 263.9 Q200.3 263.8 200.4 261.4 Q200.6 263.9 203 263.9 Q205.6 264 205.8 262.2 V259.6" stroke="#000" stroke-width="1.9" fill="none" stroke-linejoin="round"/>
</svg>
<div class="t" style="left:292.5px;top:168.0px;font-size:13px;color:#222;">Jisoo247</div>
<div class="t" style="left:292.5px;top:185.0px;font-size:13px;color:#222;">hd247</div>
<div class="a" style="left:0px;top:528px;width:1024px;height:49px;background:linear-gradient(#f2f2f2,#ececec)"></div>
<div class="a" style="left:0px;top:527.5px;width:1024px;height:1.5px;background:#d3d8df"></div>
<div class="a" style="left:232px;top:530px;width:1px;height:15px;background:#e2e2e2"></div>
<div class="a" style="left:349px;top:530px;width:1px;height:15px;background:#e2e2e2"></div>
<div class="a" style="left:466.5px;top:530px;width:1px;height:15px;background:#e2e2e2"></div>
<div class="a" style="left:876px;top:530px;width:1px;height:15px;background:#e2e2e2"></div>
<svg class="a" style="left:1px;top:534px;" width="10" height="10" viewBox="0 0 10 10"><path d="M5 0.5 V9.5 M0.5 5 H9.5" stroke="#333" stroke-width="1"/><path d="M5 0 L3.5 1.8 H6.5 Z M5 10 L3.5 8.2 H6.5 Z M0 5 L1.8 3.5 V6.5 Z M10 5 L8.2 3.5 V6.5 Z" fill="#333"/></svg>
<svg class="a" style="left:119px;top:533px;" width="12" height="11" viewBox="0 0 12 11"><path d="M1 0.5 V3" stroke="#444"/><rect x="3.5" y="1.5" width="7.5" height="6" fill="none" stroke="#444" stroke-dasharray="1.3 1"/><path d="M3 9.5 H11" stroke="#444" stroke-width="1.2"/></svg>
<svg class="a" style="left:236px;top:533px;" width="12" height="11" viewBox="0 0 12 11"><path d="M1 0.5 V3.5" stroke="#444"/><rect x="3.5" y="1.5" width="7.5" height="6" fill="none" stroke="#444"/><path d="M3 9.5 H11" stroke="#444" stroke-width="1.2"/></svg>
<div class="t" style="left:250.5px;top:532.5px;font-size:8.5px;color:#333;">532 × 402px</div>
<div class="t" style="left:892px;top:532.5px;font-size:8.5px;color:#333;">100%</div>
<svg class="a" style="left:918px;top:532px;" width="13" height="13" viewBox="0 0 13 13"><circle cx="6.5" cy="6.5" r="5.8" fill="none" stroke="#666" stroke-width="1"/><path d="M3.5 6.5 H9.5" stroke="#444" stroke-width="1.2"/></svg>
<div class="a" style="left:938px;top:537px;width:64px;height:2px;background:#dedede"></div>
<svg class="a" style="left:965.5px;top:531.5px;" width="9" height="12.5" viewBox="0 0 9 12.5"><path d="M0.5 0.5 H8.5 V9 L4.5 12 L0.5 9 Z" fill="#0f6fd0"/></svg>
<svg class="a" style="left:1009px;top:532px;" width="13" height="13" viewBox="0 0 13 13"><circle cx="6.5" cy="6.5" r="5.8" fill="none" stroke="#666" stroke-width="1"/><path d="M3.5 6.5 H9.5 M6.5 3.5 V9.5" stroke="#444" stroke-width="1.2"/></svg>
<svg class="a" style="left:10px;top:556px;" width="12" height="13" viewBox="0 0 12 13"><path d="M0 1.6 L5 0.9 V6 H0 Z M5.7 0.8 L12 0 V6 H5.7 Z M0 6.7 H5 V11.9 L0 11.2 Z M5.7 6.7 H12 V12.8 L5.7 12 Z" fill="#111"/></svg>
<svg class="a" style="left:45px;top:555px;" width="14" height="14" viewBox="0 0 14 14"><circle cx="8.5" cy="5.5" r="4.3" fill="none" stroke="#222" stroke-width="1.3"/><path d="M5.5 8.5 L1 13" stroke="#222" stroke-width="1.5"/></svg>
<svg class="a" style="left:82px;top:556px;" width="12" height="13" viewBox="0 0 12 13"><rect x="1.5" y="3" width="7" height="7" fill="none" stroke="#222" stroke-width="1.2"/><path d="M0 1 H10 M0 12 H10" stroke="#222" stroke-width="1.2"/><path d="M11.5 1.5 V4 M11.5 6 V11" stroke="#222" stroke-width="1.4"/></svg>
<svg class="a" style="left:117px;top:554px;" width="17" height="15" viewBox="0 0 17 15"><path d="M0 2 H6 L7.5 3.5 H17 V14 H0 Z" fill="#e8b74a"/><rect x="0" y="5" width="17" height="9" fill="#f9d774"/><path d="M3.5 14 V9.5 H13.5 V14 H11 V11.5 H6 V14 Z" fill="#3a8fc6"/></svg>
<svg class="a" style="left:153.5px;top:554px;" width="17" height="17" viewBox="0 0 17 17"><path d="M5 4 A3.5 3.5 0 0 1 12 4" stroke="#111" stroke-width="1.3" fill="none"/><rect x="0.5" y="4" width="16" height="13" fill="#111"/><rect x="4" y="7" width="4" height="3.5" fill="#f25022"/><rect x="9" y="7" width="4" height="3.5" fill="#7fba00"/><rect x="4" y="11.5" width="4" height="3.5" fill="#00a4ef"/><rect x="9" y="11.5" width="4" height="3.5" fill="#ffb900"/></svg>
<svg class="a" style="left:190.7px;top:554.3px;" width="18" height="17" viewBox="0 0 18 17"><circle cx="10" cy="8.5" r="8" fill="#d35230"/><path d="M10 0.5 A8 8 0 0 1 18 8.5 H10 Z" fill="#ff8f6b"/><rect x="0" y="3.5" width="10" height="10" rx="1" fill="#c43e1c"/><text x="5" y="11.8" font-size="8.5" font-weight="bold" fill="#fff" text-anchor="middle" font-family="Liberation Sans">P</text></svg>
<svg class="a" style="left:229px;top:553px;" width="15" height="18" viewBox="0 0 15 18"><rect x="0" y="0" width="15" height="18" fill="#3a3a3a"/><rect x="2" y="2" width="11" height="3.5" fill="#e8e8e8"/><rect x="2.0" y="7.0" width="2.6" height="1.8" fill="#e8e8e8"/><rect x="5.8" y="7.0" width="2.6" height="1.8" fill="#e8e8e8"/><rect x="9.6" y="7.0" width="2.6" height="1.8" fill="#e8e8e8"/><rect x="2.0" y="9.8" width="2.6" height="1.8" fill="#e8e8e8"/><rect x="5.8" y="9.8" width="2.6" height="1.8" fill="#e8e8e8"/><rect x="9.6" y="9.8" width="2.6" height="1.8" fill="#e8e8e8"/><rect x="2.0" y="12.6" width="2.6" height="1.8" fill="#e8e8e8"/><rect x="5.8" y="12.6" width="2.6" height="1.8" fill="#e8e8e8"/><rect x="9.6" y="12.6" width="2.6" height="1.8" fill="#e8e8e8"/><rect x="2.0" y="15.399999999999999" width="2.6" height="1.8" fill="#e8e8e8"/><rect x="5.8" y="15.399999999999999" width="2.6" height="1.8" fill="#e8e8e8"/><rect x="9.6" y="15.399999999999999" width="2.6" height="1.8" fill="#e8e8e8"/></svg>
<div class="a" style="left:222px;top:575px;width:22px;height:2px;background:#d7c98c"></div>
<svg class="a" style="left:265px;top:553px;" width="17" height="17" viewBox="0 0 17 17"><circle cx="8" cy="9" r="7" fill="#7ac142"/><circle cx="8" cy="9" r="3.5" fill="#f0f0f0"/><circle cx="8" cy="9" r="2" fill="#7ac142"/><path d="M12 1 L13 4 M15 3 L13.5 5 M16 7 L14 6.5" stroke="#7ac142" stroke-width="1.2"/></svg>
<svg class="a" style="left:302px;top:553px;" width="18" height="18" viewBox="0 0 18 18"><circle cx="9" cy="9" r="8.5" fill="#1e73c8"/><circle cx="9" cy="9" r="6.5" fill="#3a95e6"/><rect x="4.5" y="5.5" width="9" height="7" fill="#fff"/><path d="M5.5 11.5 L12.5 6.5" stroke="#1e73c8" stroke-width="1"/></svg>
<div class="a" style="left:329px;top:547px;width:36.5px;height:30px;background:#f9f9f9"></div>
<svg class="a" style="left:338px;top:553px;" width="19" height="17" viewBox="0 0 19 17"><ellipse cx="8" cy="10" rx="7.5" ry="6" fill="#d8e3ea" stroke="#8aa0b0" stroke-width=".8"/><circle cx="5" cy="9" r="1.3" fill="#3b8ad9"/><circle cx="8" cy="7" r="1.3" fill="#e84a3a"/><circle cx="5.5" cy="12.5" r="1.3" fill="#5cb85c"/><path d="M9 12 L18 1" stroke="#b0805a" stroke-width="2.2"/></svg>
<div class="a" style="left:329px;top:575px;width:36.5px;height:2px;background:#d7c98c"></div>
<svg class="a" style="left:374px;top:553px;" width="18" height="18" viewBox="0 0 18 18"><circle cx="9" cy="9" r="8.5" fill="#db4437"/><path d="M9 9 L1.6 4.75 A8.5 8.5 0 0 0 9 17.5 Z" fill="#0f9d58"/><path d="M9 9 L16.4 4.75 A8.5 8.5 0 0 1 9 17.5 Z" fill="#ffcd40"/><path d="M9 9 L1.6 4.75 A8.5 8.5 0 0 1 16.4 4.75 Z" fill="#db4437"/><circle cx="9" cy="9" r="4" fill="#fff"/><circle cx="9" cy="9" r="3.1" fill="#4285f4"/></svg>
<div class="a" style="left:370px;top:575px;width:28px;height:2px;background:#d7c98c"></div>
<svg class="a" style="left:923px;top:558px;" width="11" height="7" viewBox="0 0 11 7"><path d="M0.5 6 L5.5 1 L10.5 6" stroke="#222" stroke-width="1.2" fill="none"/></svg>
<div class="t" style="left:930.7px;top:550.0px;width:60px;text-align:center;font-size:8.5px;color:#222;">10:08 AM</div>
<div class="t" style="left:930.7px;top:563.0px;width:60px;text-align:center;font-size:8.5px;color:#222;">25/10/2021</div>
<svg class="a" style="left:993px;top:556px;" width="14" height="13" viewBox="0 0 14 13"><path d="M0.6 0.6 H13.4 V9.5 H8 L6 12 L4.8 9.5 H0.6 Z" fill="none" stroke="#222" stroke-width="1.1"/></svg>
<div class="a" style="left:1020px;top:548px;width:1px;height:29px;background:#c8c8c8"></div>
</body></html>
